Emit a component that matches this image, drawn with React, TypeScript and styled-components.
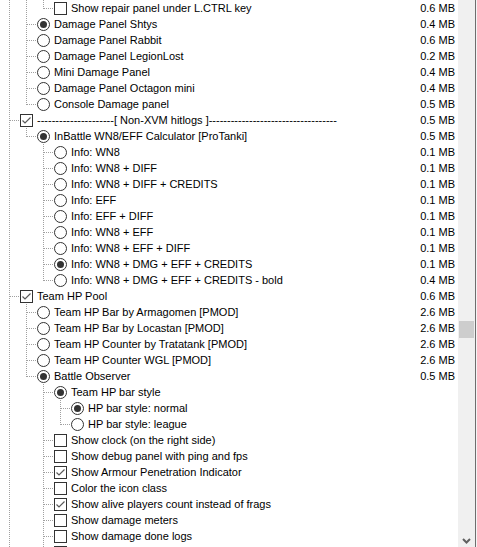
import React from 'react';
import styled, { createGlobalStyle, css } from 'styled-components';

const GlobalStyle = createGlobalStyle`
  html, body {
    margin: 0;
    padding: 0;
    background: #ffffff;
  }
  * {
    box-sizing: border-box;
  }
`;

type GuideKind = '|' | ' ' | '├' | '└';

interface Item {
  guides: string;
  kind: 'check' | 'radio';
  checked?: boolean;
  label?: string;
  size?: string;
}

const items: Item[] = [
  { guides: '||└', kind: 'check', label: 'Show repair panel under L.CTRL key', size: '0.6 MB' },
  { guides: '|├', kind: 'radio', checked: true, label: 'Damage Panel Shtys', size: '0.4 MB' },
  { guides: '|├', kind: 'radio', label: 'Damage Panel Rabbit', size: '0.6 MB' },
  { guides: '|├', kind: 'radio', label: 'Damage Panel LegionLost', size: '0.2 MB' },
  { guides: '|├', kind: 'radio', label: 'Mini Damage Panel', size: '0.4 MB' },
  { guides: '|├', kind: 'radio', label: 'Damage Panel Octagon mini', size: '0.4 MB' },
  { guides: '|└', kind: 'radio', label: 'Console Damage panel', size: '0.5 MB' },
  {
    guides: '├',
    kind: 'check',
    checked: true,
    label: '---------------------[ Non-XVM hitlogs ]-----------------------------------',
    size: '0.5 MB',
  },
  { guides: '|└', kind: 'radio', checked: true, label: 'InBattle WN8/EFF Calculator [ProTanki]', size: '0.5 MB' },
  { guides: '| ├', kind: 'radio', label: 'Info: WN8', size: '0.1 MB' },
  { guides: '| ├', kind: 'radio', label: 'Info: WN8 + DIFF', size: '0.1 MB' },
  { guides: '| ├', kind: 'radio', label: 'Info: WN8 + DIFF + CREDITS', size: '0.1 MB' },
  { guides: '| ├', kind: 'radio', label: 'Info: EFF', size: '0.1 MB' },
  { guides: '| ├', kind: 'radio', label: 'Info: EFF + DIFF', size: '0.1 MB' },
  { guides: '| ├', kind: 'radio', label: 'Info: WN8 + EFF', size: '0.1 MB' },
  { guides: '| ├', kind: 'radio', label: 'Info: WN8 + EFF + DIFF', size: '0.1 MB' },
  { guides: '| ├', kind: 'radio', checked: true, label: 'Info: WN8 + DMG + EFF + CREDITS', size: '0.1 MB' },
  { guides: '| └', kind: 'radio', label: 'Info: WN8 + DMG + EFF + CREDITS - bold', size: '0.4 MB' },
  { guides: '├', kind: 'check', checked: true, label: 'Team HP Pool', size: '0.6 MB' },
  { guides: '|├', kind: 'radio', label: 'Team HP Bar by Armagomen [PMOD]', size: '2.6 MB' },
  { guides: '|├', kind: 'radio', label: 'Team HP Bar by Locastan [PMOD]', size: '2.6 MB' },
  { guides: '|├', kind: 'radio', label: 'Team HP Counter by Tratatank [PMOD]', size: '2.6 MB' },
  { guides: '|├', kind: 'radio', label: 'Team HP Counter WGL [PMOD]', size: '2.6 MB' },
  { guides: '|└', kind: 'radio', checked: true, label: 'Battle Observer', size: '0.5 MB' },
  { guides: '| ├', kind: 'radio', checked: true, label: 'Team HP bar style' },
  { guides: '| |├', kind: 'radio', checked: true, label: 'HP bar style: normal' },
  { guides: '| |└', kind: 'radio', label: 'HP bar style: league' },
  { guides: '| ├', kind: 'check', label: 'Show clock (on the right side)' },
  { guides: '| ├', kind: 'check', label: 'Show debug panel with ping and fps' },
  { guides: '| ├', kind: 'check', checked: true, label: 'Show Armour Penetration Indicator' },
  { guides: '| ├', kind: 'check', label: 'Color the icon class' },
  { guides: '| ├', kind: 'check', checked: true, label: 'Show alive players count instead of frags' },
  { guides: '| ├', kind: 'check', label: 'Show damage meters' },
  { guides: '| ├', kind: 'check', label: 'Show damage done logs' },
  // next row, only its top edge shows at the bottom of the list
  { guides: '| ├', kind: 'check' },
];

const LINE = '#a0a0a0';
const vDots = `repeating-linear-gradient(to bottom, ${LINE} 0 1px, transparent 1px 2px)`;
const hDots = `repeating-linear-gradient(to right, ${LINE} 0 1px, transparent 1px 2px)`;

const Window = styled.div`
  display: flex;
  width: 477px;
  height: 547px;
  overflow: hidden;
  background: #ffffff;
  font-family: 'Liberation Sans', Arial, sans-serif;
  font-size: 11px;
  color: #000000;
`;

const List = styled.div`
  flex: 0 0 458px;
  display: flex;
  flex-direction: column;
  overflow: hidden;
`;

const Row = styled.div`
  flex: 0 0 16px;
  display: flex;
  align-items: center;
  height: 16px;
  padding-left: 1px;
  line-height: 16px;
  white-space: nowrap;
`;

const Guide = styled.span<{ $kind: GuideKind; $last: boolean }>`
  flex: 0 0 ${p => (p.$last ? 19 : 17)}px;
  align-self: stretch;
  background-repeat: no-repeat;
  ${p => p.$kind === '|' && css`
    background-image: ${vDots};
    background-size: 1px 100%;
    background-position: 8px 0;
  `}
  ${p => p.$kind === '├' && css`
    background-image: ${vDots}, ${hDots};
    background-size: 1px 100%, 10px 1px;
    background-position: 8px 0, 9px 8px;
  `}
  ${p => p.$kind === '└' && css`
    background-image: ${vDots}, ${hDots};
    background-size: 1px 9px, 10px 1px;
    background-position: 8px 0, 9px 8px;
  `}
`;

const CheckBox = styled.span`
  flex: 0 0 13px;
  width: 13px;
  height: 13px;
  border: 1px solid #333333;
  background: #ffffff;
  display: flex;
  align-items: center;
  justify-content: center;

  svg {
    display: block;
  }
`;

const Radio = styled.span<{ $checked?: boolean }>`
  flex: 0 0 13px;
  width: 13px;
  height: 13px;
  border: 1px solid #333333;
  border-radius: 50%;
  background: #ffffff;
  display: flex;
  align-items: center;
  justify-content: center;

  &::after {
    content: '';
    display: ${p => (p.$checked ? 'block' : 'none')};
    width: 7px;
    height: 7px;
    border-radius: 50%;
    background: #333333;
  }
`;

const Label = styled.span`
  margin-left: 4px;
`;

const Size = styled.span`
  margin-left: auto;
  padding-right: 3px;
  padding-left: 8px;
`;

const ScrollBar = styled.div`
  flex: 0 0 17px;
  display: flex;
  flex-direction: column;
  align-items: center;
  background: #f0f0f0;
`;

const Thumb = styled.div`
  margin-top: 321px;
  width: 15px;
  height: 17px;
  background: #cdcdcd;
`;

const Spacer = styled.div`
  flex: 1;
`;

const ArrowButton = styled.div`
  flex: 0 0 17px;
  width: 17px;
  display: flex;
  align-items: center;
  justify-content: center;
  padding-top: 5px;
`;

const Edge = styled.div`
  flex: 0 0 2px;
  border-left: 1px solid #6e6e6e;
  background: #f4f4f4;
`;

const CheckMark = () => (
  <svg width="11" height="11" viewBox="0 0 11 11">
    <path d="M1.5 5.5 L4 8 L9.5 2.5" fill="none" stroke="#5a5a5a" strokeWidth="1.2" />
  </svg>
);

const DownChevron = () => (
  <svg width="9" height="6" viewBox="0 0 9 6">
    <path d="M1 1 L4.5 4.5 L8 1" fill="none" stroke="#606060" strokeWidth="2" />
  </svg>
);

const TreeRow: React.FC<{ item: Item }> = ({ item }) => {
  const guides = item.guides.split('') as GuideKind[];
  return (
    <Row>
      {guides.map((g, i) => (
        <Guide key={i} $kind={g} $last={i === guides.length - 1} />
      ))}
      {item.kind === 'check' ? (
        <CheckBox>{item.checked && <CheckMark />}</CheckBox>
      ) : (
        <Radio $checked={item.checked} />
      )}
      {item.label && <Label>{item.label}</Label>}
      {item.size && <Size>{item.size}</Size>}
    </Row>
  );
};

export default function App() {
  return (
    <>
      <GlobalStyle />
      <Window>
        <List>
          {items.map((item, i) => (
            <TreeRow key={i} item={item} />
          ))}
        </List>
        <ScrollBar>
          <Thumb />
          <Spacer />
          <ArrowButton>
            <DownChevron />
          </ArrowButton>
        </ScrollBar>
        <Edge />
      </Window>
    </>
  );
}
